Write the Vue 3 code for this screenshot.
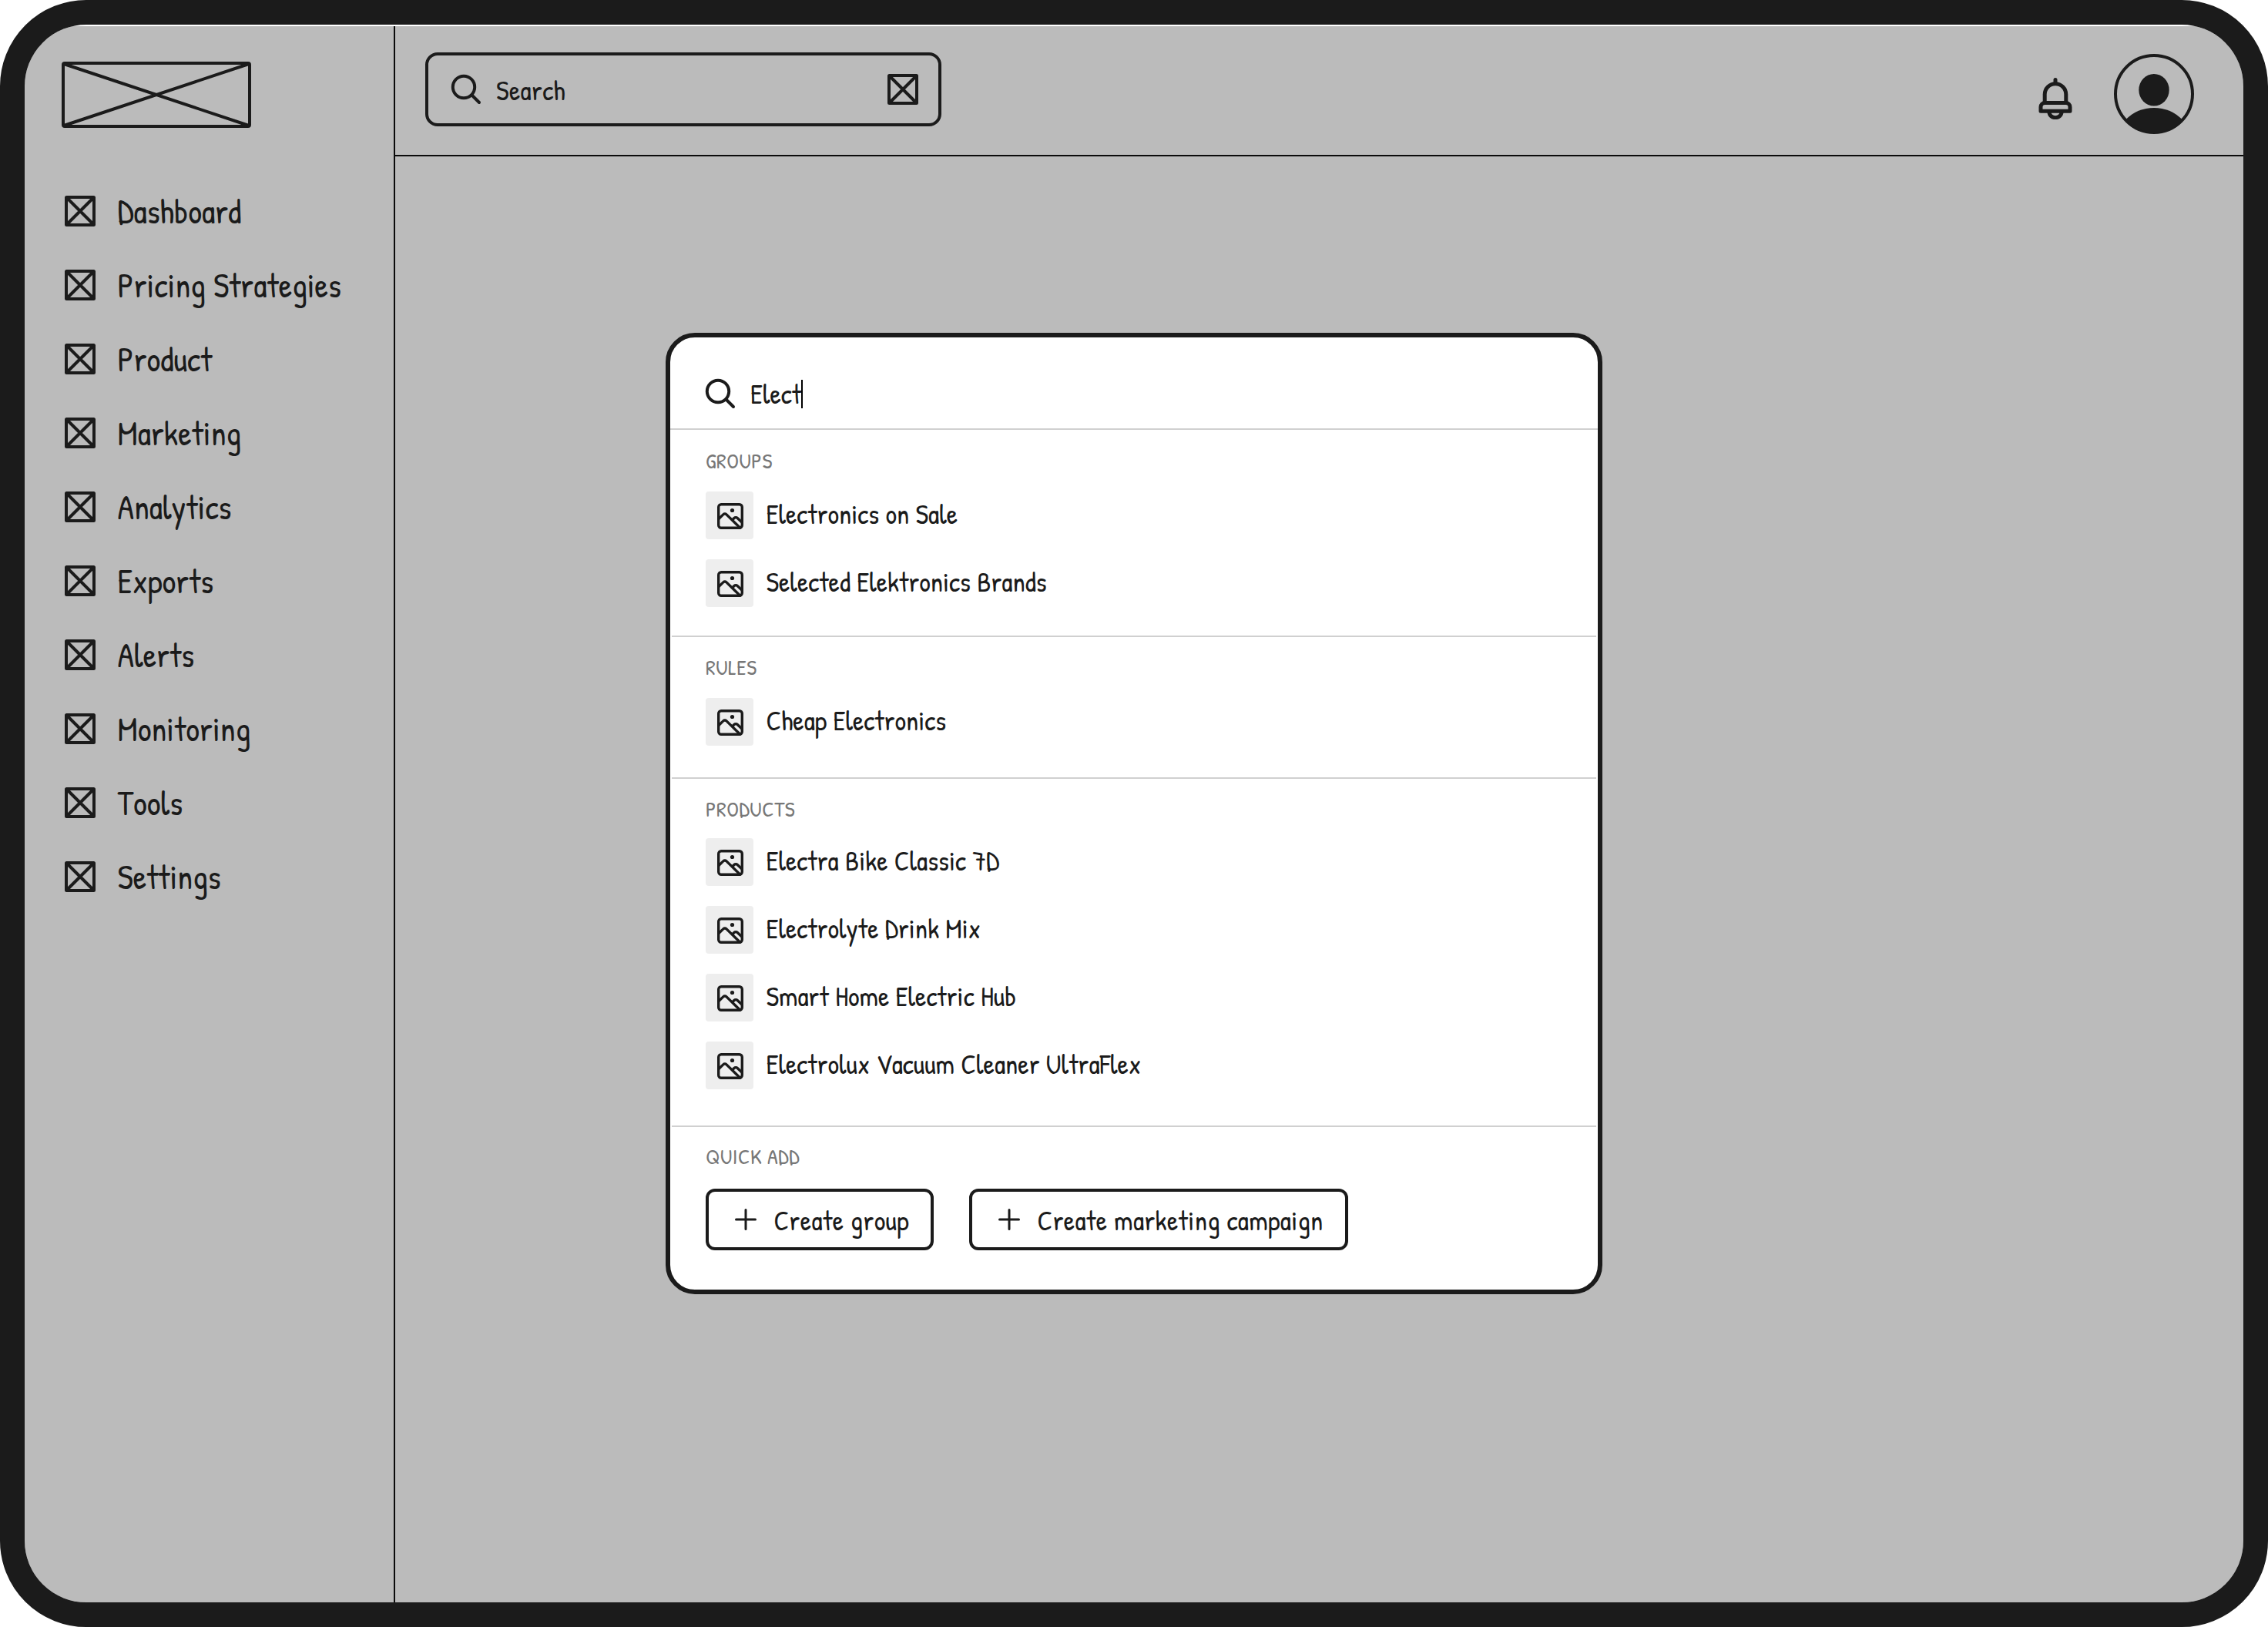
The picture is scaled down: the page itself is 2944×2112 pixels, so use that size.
<template>
  <div class="device">
    <aside class="sidebar">
      <svg class="logo" viewBox="0 0 246 86">
        <rect x="2" y="2" width="242" height="82" rx="2" />
        <path d="M3 3L243 83M243 3L3 83" />
      </svg>
      <nav class="menu">
        <a v-for="item in menu" :key="item" class="menu-item">
          <svg class="cross" viewBox="0 0 40 40">
            <rect x="2" y="2" width="36" height="36" rx="0.5" />
            <path d="M3 3L37 37M37 3L3 37" />
          </svg>
          <span>{{ item }}</span>
        </a>
      </nav>
    </aside>

    <div class="main">
      <header class="topbar">
        <div class="search">
          <svg class="magnifier" viewBox="0 0 40 40">
            <circle cx="17" cy="17" r="14.2" />
            <path d="M27.5 27.5L37 37" />
          </svg>
          <span class="search-text">Search</span>
          <svg class="cross" viewBox="0 0 40 40">
            <rect x="2" y="2" width="36" height="36" rx="0.5" />
            <path d="M3 3L37 37M37 3L3 37" />
          </svg>
        </div>
        <div class="account">
          <svg class="bell" viewBox="0 0 44 54">
            <path d="M22 2.5V7" />
            <path d="M8.2 31V21.5a13.8 13.8 0 0 1 27.6 0V31" />
            <path d="M3 43.2V38a5.5 5.5 0 0 1 5.5-5.5h27a5.5 5.5 0 0 1 5.5 5.5v5.2z" />
            <path d="M14 44.5a8 7.2 0 0 0 16 0" />
          </svg>
          <svg class="avatar" viewBox="0 0 104 104">
            <circle class="ring" cx="52" cy="52" r="50" />
            <ellipse cx="52" cy="46.7" rx="19.7" ry="20.8" />
            <path d="M15 85.6C25 75 38 70 52 70s27 5 37 15.6A50 50 0 0 1 15 85.6z" />
          </svg>
        </div>
      </header>
    </div>

    <div class="modal">
      <div class="modal-search">
        <svg class="magnifier" viewBox="0 0 40 40">
          <circle cx="17" cy="17" r="14.2" />
          <path d="M27.5 27.5L37 37" />
        </svg>
        <span class="query">{{ query }}</span>
        <i class="caret" />
      </div>

      <section
        v-for="group in groups"
        :key="group.title"
        class="section"
        :class="group.key"
      >
        <h3 class="section-title">{{ group.title }}</h3>
        <ul class="results">
          <li v-for="item in group.items" :key="item" class="result">
            <span class="thumb">
              <svg viewBox="0 0 34 34">
                <rect x="1.7" y="1.7" width="30.6" height="30.6" rx="3.5" />
                <path d="M2 20.5l5.8-5.6a3 3 0 0 1 4.2 0L29.5 32" />
                <path d="M20 21.5l2-2a3 3 0 0 1 4.2 0l5.8 5.5" />
                <circle cx="19.5" cy="9.5" r="2.6" />
              </svg>
            </span>
            <span class="result-name">{{ item }}</span>
          </li>
        </ul>
      </section>

      <section class="section quick">
        <h3 class="section-title">QUICK ADD</h3>
        <div class="actions">
          <button v-for="action in actions" :key="action" class="action">
            <svg class="plus" viewBox="0 0 28 28">
              <path d="M14 1.5V26.5M1.5 14H26.5" />
            </svg>
            <span>{{ action }}</span>
          </button>
        </div>
      </section>
    </div>
  </div>
</template>

<script setup>
import { ref } from "vue";

const menu = [
  "Dashboard",
  "Pricing Strategies",
  "Product",
  "Marketing",
  "Analytics",
  "Exports",
  "Alerts",
  "Monitoring",
  "Tools",
  "Settings"
];

const query = ref("Elect");

const groups = ref([
  {
    key: "groups",
    title: "GROUPS",
    items: ["Electronics on Sale", "Selected Elektronics Brands"]
  },
  {
    key: "rules",
    title: "RULES",
    items: ["Cheap Electronics"]
  },
  {
    key: "products",
    title: "PRODUCTS",
    items: [
      "Electra Bike Classic 7D",
      "Electrolyte Drink Mix",
      "Smart Home Electric Hub",
      "Electrolux Vacuum Cleaner UltraFlex"
    ]
  }
]);

const actions = ["Create group", "Create marketing campaign"];
</script>

<style>
body {
  margin: 0;
  background: #fff;
}
</style>

<style scoped>
.device {
  position: relative;
  display: flex;
  box-sizing: border-box;
  width: 2944px;
  height: 2112px;
  overflow: hidden;
  font-family: "Patrick Hand", "Roboto Condensed", sans-serif;
  font-size: 36px;
  line-height: 48px;
  color: #1b1b1b;
  background: linear-gradient(#fff 2px, #bbb 2px);
  background-clip: padding-box;
  border: 32px solid #1b1b1b;
  border-radius: 112px;
}

svg {
  display: block;
  flex: none;
  fill: none;
  stroke: #1b1b1b;
  stroke-width: 4;
  stroke-linecap: round;
  stroke-linejoin: round;
}

.sidebar {
  box-sizing: border-box;
  flex: none;
  width: 481px;
  padding: 46px 0 0 48px;
  margin-top: 2px;
  border-right: 2px solid #0a0a0a;
}

.logo {
  width: 246px;
  height: 86px;
}

.menu {
  display: flex;
  flex-direction: column;
  gap: 40px;
  padding: 80px 0 0 4px;
}

.menu-item {
  display: flex;
  gap: 28.5px;
  align-items: center;
  height: 56px;
  font-size: 44px;
  line-height: 58px;
  white-space: nowrap;
}

.cross {
  width: 40px;
  height: 40px;
}

.main {
  flex: 1;
  margin-top: 2px;
}

.topbar {
  box-sizing: border-box;
  display: flex;
  align-items: flex-start;
  justify-content: space-between;
  height: 169px;
  padding: 34px 64px 0 39px;
  border-bottom: 2px solid #0a0a0a;
}

.search {
  box-sizing: border-box;
  display: flex;
  align-items: center;
  width: 670px;
  height: 96px;
  padding: 0 26px 0 29px;
  border: 4px solid #1b1b1b;
  border-radius: 16px;
}

.magnifier {
  width: 40px;
  height: 40px;
}

.search-text {
  flex: 1;
  padding: 2px 0 0 19px;
  letter-spacing: 0.36px;
}

.account {
  display: flex;
  gap: 54px;
  padding-top: 2px;
}

.bell {
  width: 44px;
  height: 54px;
  margin-top: 31px;
  stroke-width: 5;
}

.avatar {
  width: 104px;
  height: 104px;
  fill: #1b1b1b;
  stroke: none;
}

.avatar .ring {
  fill: none;
  stroke: #1b1b1b;
}

.modal {
  position: absolute;
  top: 400px;
  left: 832px;
  box-sizing: border-box;
  width: 1216px;
  height: 1248px;
  overflow: hidden;
  background: #fff;
  border: 6px solid #1b1b1b;
  border-radius: 38px;
}

.modal-search {
  box-sizing: border-box;
  display: flex;
  align-items: center;
  height: 120px;
  padding: 28px 46px 0 45px;
  border-bottom: 2px solid #d0d0d0;
}

.query {
  padding: 0 0 1px 19px;
}

.caret {
  width: 2px;
  height: 37px;
  background: #000;
}

.section {
  padding: 21px 44px 0;
  margin: 0 2px;
  border-bottom: 2px solid #d0d0d0;
}

.section-title {
  margin: 0 0 21px;
  font-size: 28px;
  font-weight: 400;
  line-height: 38px;
  color: #777;
  letter-spacing: 0.56px;
}

.groups {
  padding-bottom: 37px;
}

.rules {
  padding-top: 20px;
  padding-bottom: 41px;
}

.products {
  padding-top: 20px;
  padding-bottom: 47px;
}

.products .section-title {
  margin-bottom: 19px;
}

.quick {
  padding-top: 19px;
  border-bottom: none;
}

.quick .section-title {
  margin-bottom: 23px;
}

.results {
  display: flex;
  flex-direction: column;
  gap: 26px;
  padding: 0;
  margin: 0;
  list-style: none;
}

.result {
  display: flex;
  gap: 16.5px;
  align-items: center;
}

.result-name {
  padding-bottom: 4px;
}

.thumb {
  display: flex;
  align-items: center;
  justify-content: center;
  width: 62px;
  height: 62px;
  background: #eee;
  border-radius: 4px;
}

.thumb svg {
  width: 34px;
  height: 34px;
  margin: 2px 0 0 2px;
  stroke-width: 3.4;
}

.thumb circle {
  fill: #1b1b1b;
  stroke: none;
}

.actions {
  display: flex;
  gap: 46px;
}

.action {
  box-sizing: border-box;
  display: flex;
  gap: 22.5px;
  align-items: center;
  height: 80px;
  padding: 2px 28px 0 34px;
  font: inherit;
  color: inherit;
  letter-spacing: 0.36px;
  background: none;
  border: 4px solid #1b1b1b;
  border-radius: 12px;
}

.plus {
  width: 28px;
  height: 28px;
  margin-top: -2px;
  stroke-width: 3;
}
</style>
